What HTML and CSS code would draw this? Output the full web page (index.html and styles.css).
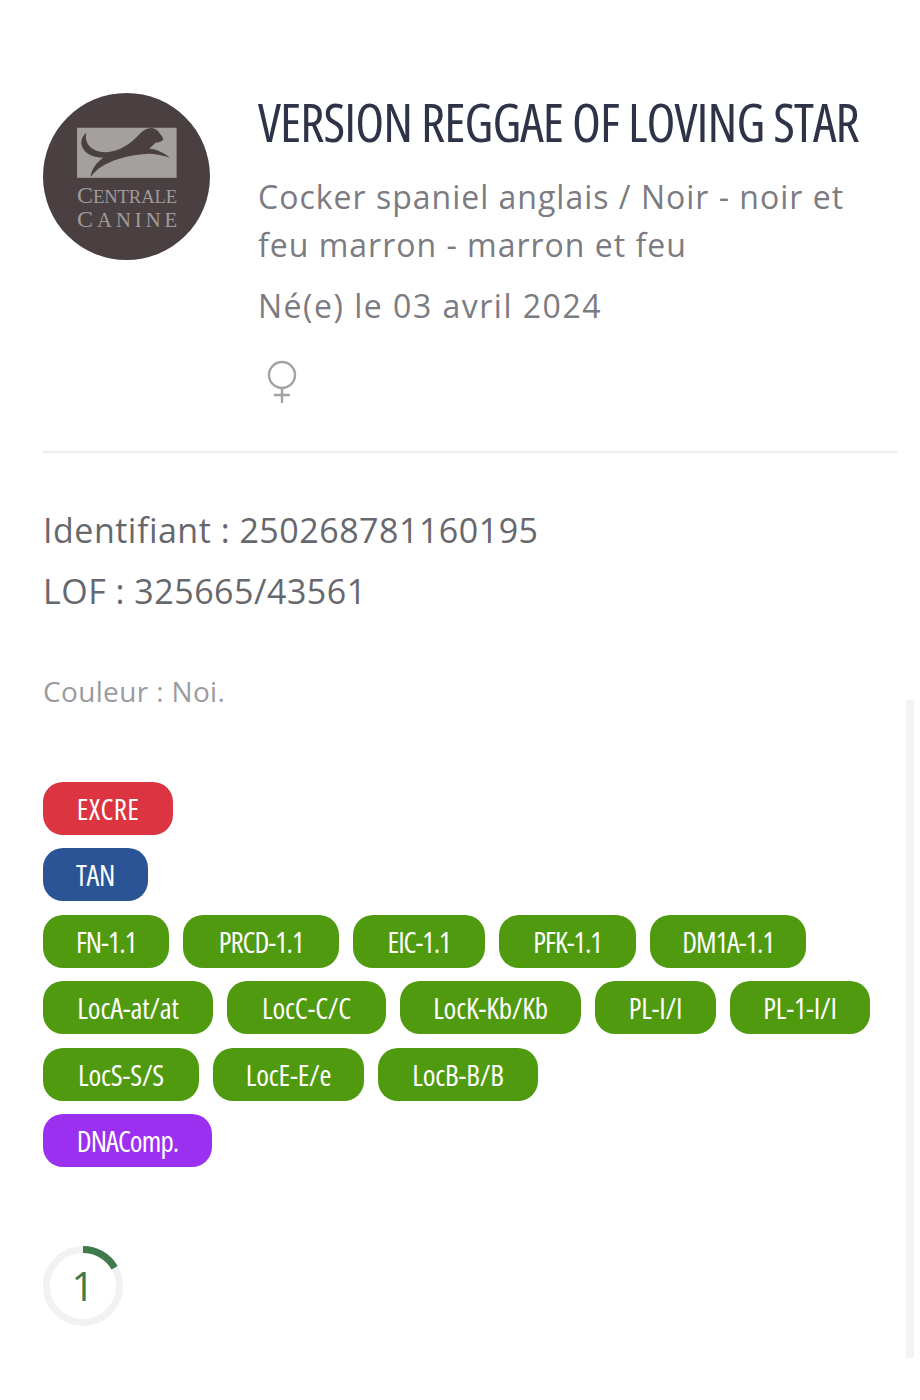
FILE: index.html
```html
<!DOCTYPE html>
<html lang="fr">
<head>
    <meta charset="UTF-8">
    <meta name="viewport" content="width=device-width, initial-scale=1.0">
    <title>Version Reggae of Loving Star</title>
    <link rel="stylesheet" href="styles.css">
</head>
<body>
    <div class="scrollbar"></div>

    <div class="page">
        <div class="dog-head">
            <svg class="logo" viewBox="38 38 500 500" role="img" aria-label="Centrale Canine">
                <circle cx="288" cy="288" r="250" fill="#4a4041"/>
                <rect x="140" y="142" width="298" height="150" fill="#a5a0a0"/>
                <path fill="#4a4041" d="M168 157 C162 178 172 200 196 210 C216 218 240 216 262 208 C288 198 310 180 328 160 C338 150 350 142 364 143 C376 144 384 152 388 160 C394 166 398 172 398 178 C392 184 384 187 374 187 C368 194 362 200 356 204 C378 206 402 218 419 232 C398 226 376 220 352 220 C322 222 292 226 262 236 C230 246 200 262 180 290 C184 266 196 248 218 232 C190 232 166 222 157 203 C148 186 154 168 168 157 Z"/>
                <text class="logo-text" x="140" y="366" textLength="300"><tspan class="logo-cap">C</tspan>ENTRALE</text>
                <text class="logo-text canine" x="140" y="440" textLength="300"><tspan class="logo-cap">C</tspan>ANINE</text>
            </svg>
            <div class="dog-info">
                <h1 class="dog-name">VERSION REGGAE OF LOVING STAR</h1>
                <p class="dog-breed">Cocker spaniel anglais / Noir - noir et feu marron - marron et feu</p>
                <p class="dog-birth">Né(e) le 03 avril 2024</p>
                <svg class="gender" viewBox="0 0 30 44" fill="none" stroke="#a3a3a6" stroke-width="2.4">
                    <circle cx="15" cy="15" r="13"/>
                    <path d="M15 28 V43 M7 35 H23"/>
                </svg>
            </div>
        </div>

        <div class="ids">
            <p>Identifiant : 250268781160195</p>
            <p>LOF : 325665/43561</p>
        </div>

        <p class="color-line">Couleur : Noi.</p>

        <div class="tags">
            <div class="tag-row row-excre"><span class="tag red">EXCRE</span></div>
            <div class="tag-row row-tan"><span class="tag blue">TAN</span></div>
            <div class="tag-row row-tests">
                <span class="tag green">FN-1.1</span>
                <span class="tag green">PRCD-1.1</span>
                <span class="tag green">EIC-1.1</span>
                <span class="tag green">PFK-1.1</span>
                <span class="tag green">DM1A-1.1</span>
            </div>
            <div class="tag-row row-loc">
                <span class="tag green">LocA-at/at</span>
                <span class="tag green">LocC-C/C</span>
                <span class="tag green">LocK-Kb/Kb</span>
                <span class="tag green">PL-I/I</span>
                <span class="tag green">PL-1-I/I</span>
            </div>
            <div class="tag-row row-loc2">
                <span class="tag green">LocS-S/S</span>
                <span class="tag green">LocE-E/e</span>
                <span class="tag green">LocB-B/B</span>
            </div>
            <div class="tag-row row-dna"><span class="tag purple">DNAComp.</span></div>
        </div>

        <div class="counter">
            <svg viewBox="0 0 80 80" fill="none" stroke-width="7">
                <circle cx="40" cy="40" r="36.5" stroke="#f1f2f3"/>
                <path d="M40 3.5 A36.5 36.5 0 0 1 71.6 21.7" stroke="#3f7a4c"/>
            </svg>
            <span class="counter-value">1</span>
        </div>
    </div>
</body>
</html>
```
FILE: styles.css
```css
* {
    box-sizing: border-box;
}
body {
    margin: 0;
    background: #fff;
    font-family: "Open Sans", "Noto Sans", sans-serif;
}
p, h1 {
    margin: 0;
}
.page {
    width: 897px;
    padding: 93px 0 0 43px;
}
.scrollbar {
    position: fixed;
    top: 700px;
    left: 906px;
    width: 8px;
    height: 658px;
    background: #f3f3f3;
}

/* header */
.dog-head {
    display: flex;
    gap: 48px;
    height: 360px;
    border-bottom: 2px solid #ececec;
}
.logo {
    width: 167px;
    height: 167px;
    flex: none;
}
.logo-text {
    font-family: "Liberation Serif", serif;
    font-size: 56px;
    fill: #a09b9b;
}
.canine {
    font-size: 62px;
}
.logo-cap {
    font-size: 72px;
}
.dog-info {
    width: 600px;
}
.dog-name {
    font-family: "Open Sans", sans-serif;
    font-stretch: 75%;
    font-weight: 500;
    font-size: 53px;
    line-height: 58px;
    letter-spacing: -0.9px;
    color: #2f3347;
    white-space: nowrap;
}
.dog-breed {
    margin-top: 22px;
    font-size: 32px;
    line-height: 48px;
    letter-spacing: 1px;
    color: #7b7b81;
}
.dog-birth {
    margin-top: 13px;
    font-size: 32px;
    line-height: 48px;
    letter-spacing: 1.5px;
    color: #7b7b81;
}
.gender {
    display: block;
    width: 30px;
    height: 44px;
    margin-top: 30px;
    margin-left: 9px;
}

.ids {
    margin-top: 47px;
    font-size: 34px;
    line-height: 61px;
    letter-spacing: 0.5px;
    color: #67676e;
}
.color-line {
    margin-top: 49px;
    font-size: 28px;
    line-height: 40px;
    letter-spacing: 0.35px;
    color: #9b9b9f;
}

/* tags */
.tags {
    margin-top: 71px;
    display: flex;
    flex-direction: column;
    gap: 13.4px;
}
.tag-row {
    display: grid;
    gap: 14px;
}
.row-excre { grid-template-columns: 130px; letter-spacing: 0.4px; }
.row-tan { grid-template-columns: 105px; letter-spacing: -0.4px; }
.row-tests { grid-template-columns: 126px 156px 132px 137px 156px; letter-spacing: -1px; }
.row-loc { grid-template-columns: 170px 159px 181px 121px 140px; letter-spacing: -0.2px; }
.row-loc2 { grid-template-columns: 156px 151px 160px; letter-spacing: -0.2px; }
.row-dna { grid-template-columns: 169px; letter-spacing: -0.9px; }
.tag {
    height: 53px;
    border-radius: 20px;
    font-family: "Open Sans", sans-serif;
    font-stretch: 75%;
    font-weight: 500;
    font-size: 29px;
    line-height: 53px;
    text-align: center;
    white-space: nowrap;
    color: #fff;
}
.red { background: #dc3440; }
.blue { background: #2b5497; }
.green { background: #4f9a0e; }
.purple { background: #9b30f0; }

.counter {
    position: relative;
    width: 80px;
    height: 80px;
    margin-top: 79px;
}
.counter svg {
    display: block;
}
.counter-value {
    position: absolute;
    inset: 0;
    text-align: center;
    font-size: 40px;
    font-weight: 500;
    line-height: 80px;
    color: #3f7a4c;
}
```
